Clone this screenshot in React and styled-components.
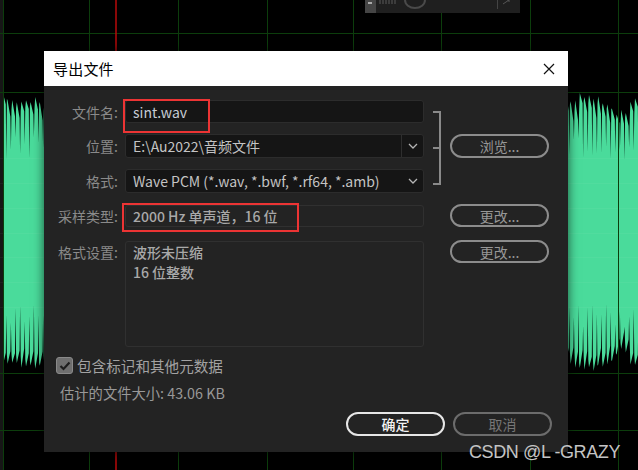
import React from "react";
import styled, { createGlobalStyle } from "styled-components";

const GlobalStyle = createGlobalStyle`
  html, body { margin: 0; padding: 0; background: #000; }
  body { font-family: "Noto Sans CJK SC", "Noto Sans", sans-serif; }
  * { box-sizing: border-box; }
`;

const UI_FONT = `"Noto Sans CJK SC", "Noto Sans", sans-serif`;

/* ---------- background editor drawing ---------- */
function rng(seed) {
  let s = seed;
  return () => {
    s = (s * 16807) % 2147483647;
    return (s - 1) / 2147483646;
  };
}

function wavePath(x0, x1, seed, peakFn) {
  const r = rng(seed);
  const top = [];
  const bot = [];
  const step = 4.6;
  for (let x = x0; x < x1; x += step) {
    const base = peakFn(x);
    const p = base + r() * 10;
    const v = 136 + r() * 26;
    top.push([x, p], [x + 2.8, p + 8 + r() * 12], [x + 3.3, v], [x + 3.9, p + 4 + r() * 8]);
    const pb = 465 - (base + r() * 10);
    const vb = 465 - (136 + r() * 26);
    bot.push([x, pb], [x + 2.8, pb - 8 - r() * 12], [x + 3.3, vb], [x + 3.9, pb - 4 - r() * 8]);
  }
  const pts = [[x0, 232], ...top, [x1, top[top.length - 1][1]], [x1, 232], [x1, bot[bot.length - 1][1]], ...bot.reverse(), [x0, 232]];
  return "M" + pts.map((p) => `${p[0].toFixed(1)},${p[1].toFixed(1)}`).join(" L") + " Z";
}

const leftWave = wavePath(3, 46, 7, () => 93);
const rightWave = wavePath(566, 642, 13, (x) => {
  if (x < 600) return 93;
  const d = Math.abs(x - 620);
  return 93 + Math.max(0, 14 - d * 0.7);
});

const V_LINES = [3, 89, 178, 267, 353, 441, 530, 618];
const H_LINES = [33, 92, 373, 430];
const FAINT = [158, 183, 208, 233, 257, 282, 307];

const Stage = styled.div`
  position: relative;
  width: 638px;
  height: 470px;
  overflow: hidden;
  background: #000;
`;

const EditorCanvas = styled.svg`
  position: absolute;
  inset: 0;
  display: block;
`;

function EditorBackground() {
  return (
    <EditorCanvas width="638" height="470" viewBox="0 0 638 470">
      <rect x="0" y="0" width="3" height="470" fill="#161616" />
      <path d={leftWave} fill="#4adb9b" />
      <path d={rightWave} fill="#4adb9b" />
      {FAINT.map((y) => (
        <line key={y} x1="0" x2="638" y1={y + 0.5} y2={y + 0.5} stroke="#ffffff" strokeOpacity="0.04" />
      ))}
      {V_LINES.map((x) => (
        <line key={x} x1={x + 0.5} x2={x + 0.5} y1="0" y2="470" stroke="#0c3d0c" />
      ))}
      {H_LINES.map((y) => (
        <line key={y} x1="0" x2="638" y1={y + 0.5} y2={y + 0.5} stroke="#0c3d0c" />
      ))}
      <line x1="116" x2="116" y1="0" y2="470" stroke="#b80a0a" strokeWidth="1.5" />
      {/* top floating widget */}
      <rect x="365" y="0" width="155" height="13" fill="#1f1f1f" />
      <rect x="365" y="0" width="11" height="13" fill="#454545" />
      <rect x="368" y="2" width="4" height="2" fill="#aaa" />
      {[380, 383, 386, 389, 392, 395].map((x) => (
        <line key={x} x1={x} x2={x} y1="0" y2="4" stroke="#5a5a5a" />
      ))}
      <path d="M405 0 A 10 8 0 0 0 425 0" fill="none" stroke="#4a4a4a" strokeWidth="2" />
      <line x1="497.5" x2="497.5" y1="0" y2="9" stroke="#444" />
      <path d="M503 4 L509 0 M507 0 L509 0 L509 2" stroke="#555" fill="none" />
    </EditorCanvas>
  );
}

/* ---------- dialog ---------- */
const Dialog = styled.div`
  position: absolute;
  left: 44px;
  top: 51px;
  width: 524px;
  background: #232323;
  display: flex;
  flex-direction: column;
  box-shadow: 0 0 10px rgba(0, 0, 0, 0.65);
  font-family: ${UI_FONT};
`;

const TitleBar = styled.div`
  height: 35px;
  background: #ffffff;
  display: flex;
  align-items: center;
  justify-content: space-between;
  padding: 0 13px 0 9px;
`;

const Title = styled.span`
  font-size: 15px;
  color: #000;
  letter-spacing: 0.2px;
`;

const CloseIcon = styled.svg`
  display: block;
`;

const Body = styled.div`
  display: flex;
  flex-direction: column;
  padding: 14px 16px 16px 12px;
`;

const FormGrid = styled.div`
  display: grid;
  grid-template-columns: 69px 299px 26px 99px;
  grid-template-rows: 23px 24px 24px 23px 109px;
  row-gap: 11px;
`;

const Label = styled.div`
  grid-column: 1;
  grid-row: ${(p) => p.$row};
  align-self: ${(p) => (p.$top ? "start" : "center")};
  margin-top: ${(p) => (p.$top ? "4px" : "0")};
  text-align: right;
  padding-right: 7px;
  font-size: 14px;
  line-height: 20px;
  color: #8a8a8a;
  white-space: nowrap;
`;

const InputBox = styled.div`
  grid-column: 2;
  grid-row: ${(p) => p.$row};
  display: flex;
  align-items: stretch;
  background: #151515;
  border: 1px solid #2c2c2c;
  border-radius: 3px;
  font-size: 14px;
  color: ${(p) => p.$color || "#c4c4c4"};
  overflow: hidden;
`;

const InputText = styled.span`
  flex: 1;
  display: flex;
  align-items: center;
  padding: 0 7px;
  white-space: nowrap;
  line-height: 20px;
`;

const Chevron = styled.span`
  width: 22px;
  display: flex;
  align-items: center;
  justify-content: center;
  border-left: 1px solid ${(p) => (p.$divided ? "#2e2e2e" : "transparent")};
`;

const StaticBox = styled.div`
  grid-column: 2;
  grid-row: ${(p) => p.$row};
  align-self: end;
  height: ${(p) => p.$h}px;
  border: 1px solid #303030;
  border-radius: 3px;
  padding: 0 7px;
  display: flex;
  flex-direction: column;
  justify-content: ${(p) => (p.$multi ? "flex-start" : "center")};
  font-size: 14px;
  line-height: 20px;
  font-weight: 500;
  color: #a9a9a9;
  white-space: nowrap;
`;

const BracketSvg = styled.svg`
  grid-column: 3;
  grid-row: 1 / 4;
  align-self: start;
  margin-top: 11px;
  display: block;
`;

const PillButton = styled.button`
  grid-column: 4;
  grid-row: ${(p) => p.$row};
  align-self: start;
  margin-top: ${(p) => p.$mt || 0}px;
  width: 99px;
  height: ${(p) => p.$h || 24}px;
  border: 2px solid ${(p) => p.$border};
  border-radius: 13px;
  background: transparent;
  color: ${(p) => p.$color};
  font-family: ${UI_FONT};
  font-size: 14px;
  font-weight: ${(p) => (p.$bold ? 500 : 400)};
  line-height: 1;
  padding: 0;
  display: flex;
  align-items: center;
  justify-content: center;
  cursor: default;
`;

const CheckRow = styled.div`
  margin-top: 10px;
  display: flex;
  align-items: center;
  gap: 4px;
  height: 17px;
`;

const CheckBox = styled.span`
  width: 17px;
  height: 17px;
  border-radius: 3px;
  background: #6f6f6f;
  border: 1px solid #8a8a8a;
  display: flex;
  align-items: center;
  justify-content: center;
`;

const CheckLabel = styled.span`
  font-size: 14.6px;
  color: #a2a2a2;
  line-height: 20px;
  white-space: nowrap;
`;

const SizeText = styled.div`
  margin-top: 9px;
  padding-left: 4px;
  font-size: 14.3px;
  line-height: 20px;
  color: #989898;
  white-space: nowrap;
`;

const ButtonRow = styled.div`
  margin-top: 9px;
  display: flex;
  justify-content: flex-end;
  gap: 8px;
`;

const Highlight = styled.div`
  position: absolute;
  left: ${(p) => p.$x}px;
  top: ${(p) => p.$y}px;
  width: ${(p) => p.$w}px;
  height: ${(p) => p.$h}px;
  border: 2px solid #ec3434;
  pointer-events: none;
`;

const Watermark = styled.div`
  position: absolute;
  left: 469px;
  top: 441px;
  font-family: "Liberation Sans", Arial, sans-serif;
  font-size: 18px;
  letter-spacing: -0.4px;
  line-height: 22px;
  color: #c4c4c4;
  white-space: nowrap;
`;

function ChevronIcon() {
  return (
    <svg width="10" height="6" viewBox="0 0 10 6">
      <path d="M1 1 L5 5 L9 1" fill="none" stroke="#b5b5b5" strokeWidth="1.3" />
    </svg>
  );
}

export default function App() {
  return (
    <>
      <GlobalStyle />
      <Stage>
        <EditorBackground />
        <Dialog>
          <TitleBar>
            <Title>导出文件</Title>
            <CloseIcon width="12" height="12" viewBox="0 0 12 12">
              <path d="M1 1 L11 11 M11 1 L1 11" stroke="#111" strokeWidth="1.2" />
            </CloseIcon>
          </TitleBar>
          <Body>
            <FormGrid>
              <Label $row={1}>文件名:</Label>
              <InputBox $row={1} $color="#c6ccd4">
                <InputText>sint.wav</InputText>
              </InputBox>

              <Label $row={2}>位置:</Label>
              <InputBox $row={2}>
                <InputText>E:\Au2022\音频文件</InputText>
                <Chevron $divided>
                  <ChevronIcon />
                </Chevron>
              </InputBox>

              <Label $row={3}>格式:</Label>
              <InputBox $row={3}>
                <InputText>Wave PCM (*.wav, *.bwf, *.rf64, *.amb)</InputText>
                <Chevron>
                  <ChevronIcon />
                </Chevron>
              </InputBox>

              <BracketSvg width="26" height="74" viewBox="0 0 26 74">
                <path d="M9 1 L16 1 L16 73 L9 73 M9 37 L16 37" fill="none" stroke="#8a8a8a" strokeWidth="2" />
              </BracketSvg>
              <PillButton $row={2} $border="#8c8c8c" $color="#979797">
                浏览...
              </PillButton>

              <Label $row={4}>采样类型:</Label>
              <StaticBox $row={4} $h={22}>
                2000 Hz 单声道，16 位
              </StaticBox>
              <PillButton $row={4} $h={23} $border="#8c8c8c" $color="#979797">
                更改...
              </PillButton>

              <Label $row={5} $top>
                格式设置:
              </Label>
              <StaticBox $row={5} $h={106} $multi>
                <span>波形未压缩</span>
                <span>16 位整数</span>
              </StaticBox>
              <PillButton $row={5} $mt={2} $h={23} $border="#8c8c8c" $color="#979797">
                更改...
              </PillButton>
            </FormGrid>

            <CheckRow>
              <CheckBox>
                <svg width="12" height="10" viewBox="0 0 12 10">
                  <path d="M1.5 5 L4.5 8 L10.5 1.5" fill="none" stroke="#1e1e1e" strokeWidth="2.2" />
                </svg>
              </CheckBox>
              <CheckLabel>包含标记和其他元数据</CheckLabel>
            </CheckRow>
            <SizeText>估计的文件大小: 43.06 KB</SizeText>
            <ButtonRow>
              <PillButton $border="#e6e6e6" $color="#f2f2f2" $bold>
                确定
              </PillButton>
              <PillButton $border="#6c6c6c" $color="#767676">
                取消
              </PillButton>
            </ButtonRow>
          </Body>
          <Highlight $x={79} $y={48} $w={87} $h={34} />
          <Highlight $x={78} $y={152} $w={177} $h={29} />
        </Dialog>
        <Watermark>CSDN @L -GRAZY</Watermark>
      </Stage>
    </>
  );
}
